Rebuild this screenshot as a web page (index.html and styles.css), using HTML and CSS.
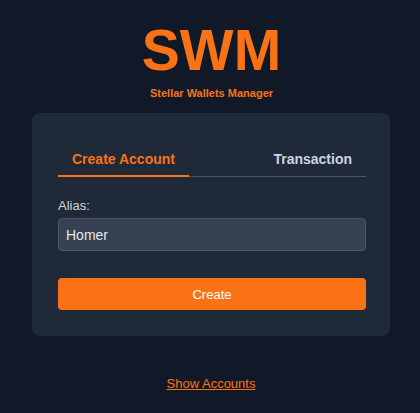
FILE: index.html
```html
<!DOCTYPE html>
<html lang="en">
<head>
<meta charset="utf-8">
<title>SWM</title>
<link rel="stylesheet" href="styles.css">
</head>
<body>
<main class="page">
  <header class="brand">
    <h1 class="logo">SWM</h1>
    <p class="tagline">Stellar Wallets Manager</p>
  </header>
  <section class="card">
    <nav class="tabs">
      <button class="tab active" type="button">Create Account</button>
      <button class="tab" type="button">Transaction</button>
    </nav>
    <form class="form">
      <label class="label" for="alias">Alias:</label>
      <input class="input" id="alias" type="text" value="Homer">
      <button class="submit" type="button">Create</button>
    </form>
  </section>
  <a class="link" href="#">Show Accounts</a>
</main>
</body>
</html>
```
FILE: styles.css
```css
* { box-sizing: border-box; }
html, body { margin: 0; padding: 0; }
body {
  background: #111827;
  font-family: "Liberation Sans", Arial, sans-serif;
  width: 420px;
  height: 413px;
}
.page {
  display: flex;
  flex-direction: column;
  align-items: center;
  padding-top: 22px;
}
.brand { text-align: center; margin-left: 3px; }
.logo {
  margin: 0;
  font-size: 57px;
  line-height: 57px;
  font-weight: 700;
  color: #f97316;
}
.tagline {
  margin: 8px 0 0;
  font-size: 11px;
  line-height: 13px;
  font-weight: 700;
  color: #f97316;
}
.card {
  margin-top: 13px;
  width: 358px;
  margin-left: 2px;
  background: #1f2937;
  border-radius: 8px;
  padding: 28px 24px 26px 26px;
}
.tabs {
  display: flex;
  justify-content: space-between;
  border-bottom: 1px solid #4b5563;
}
.tab {
  background: none;
  border: 0;
  border-bottom: 2px solid transparent;
  margin-bottom: -1px;
  padding: 10px 14px 8px;
  font-family: inherit;
  font-size: 14px;
  line-height: 16px;
  font-weight: 700;
  color: #cbd5e1;
}
.tab.active {
  color: #f97316;
  border-bottom-color: #f97316;
}
.form {
  display: flex;
  flex-direction: column;
  padding-top: 21px;
}
.label {
  font-size: 13px;
  line-height: 16px;
  color: #d1d5db;
}
.input {
  margin-top: 4px;
  height: 33px;
  background: #374151;
  border: 1px solid #4b5563;
  border-radius: 4px;
  padding: 0 7px;
  font-family: inherit;
  font-size: 14px;
  color: #e5e7eb;
}
.submit {
  margin-top: 27px;
  height: 32px;
  background: #f97316;
  border: 0;
  border-radius: 4px;
  font-family: inherit;
  font-size: 13px;
  color: #ffffff;
}
.link {
  margin-top: 40px;
  margin-left: 2px;
  font-size: 13px;
  line-height: 16px;
  color: #f97316;
  text-decoration: underline;
}
```
